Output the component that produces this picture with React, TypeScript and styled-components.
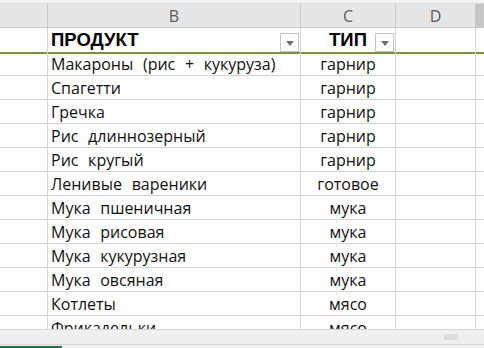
import React from "react";
import styled, { createGlobalStyle } from "styled-components";

const GlobalStyle = createGlobalStyle`
  html, body {
    margin: 0;
    padding: 0;
    background: #ffffff;
  }
  body {
    font-family: "Open Sans", "Noto Sans", sans-serif;
  }
`;

const COLS = "48px 253px 95px 80px 8px";

const Sheet = styled.div`
  width: 484px;
  height: 348px;
  display: flex;
  flex-direction: column;
  overflow: hidden;
  background: #ffffff;
`;

const TopEdge = styled.div`
  height: 3px;
  background: #f3f3f3;
  border-bottom: 1px solid #d6d6d6;
`;

const Grid = styled.div`
  height: 325px;
  overflow: hidden;
  display: grid;
  grid-template-columns: ${COLS};
  grid-auto-rows: 24px;
  align-content: start;
`;

const HeadCell = styled.div<{ $dark?: boolean }>`
  height: 23px;
  background: ${({ $dark }) => ($dark ? "#c6c6c6" : "#e6e6e6")};
  border-right: 1px solid #c9c9c9;
  border-bottom: 1px solid #c9c9c9;
  display: flex;
  align-items: center;
  justify-content: center;
  color: #5a5a5a;
  font-size: 16px;
  font-family: "Open Sans", sans-serif;
`;

const Cell = styled.div<{ $center?: boolean; $title?: boolean; $edge?: boolean }>`
  box-sizing: border-box;
  height: ${({ $title }) => ($title ? "26px" : "24px")};
  border-right: ${({ $edge }) => ($edge ? "none" : "1px solid #d4d4d4")};
  border-bottom: ${({ $title }) =>
    $title ? "2px solid #76923c" : "1px solid #d4d4d4"};
  display: flex;
  align-items: center;
  justify-content: ${({ $center }) => ($center ? "center" : "flex-start")};
  padding-left: ${({ $center }) => ($center ? "0" : "3px")};
  font-size: 16px;
  color: #111;
  white-space: pre;
  word-spacing: 5.5px;
  overflow: hidden;
  position: relative;
`;

const TitleText = styled.span`
  font-family: "Liberation Sans", Arial, sans-serif;
  font-weight: bold;
  font-size: 18.5px;
  word-spacing: 0;
  color: #000;
`;

const Filter = styled.div`
  position: absolute;
  right: 1px;
  top: 5px;
  width: 17px;
  height: 17px;
  border: 1px solid #c6c6c6;
  background: #fff;
  display: flex;
  align-items: center;
  justify-content: center;

  &::after {
    content: "";
    border-left: 4px solid transparent;
    border-right: 4px solid transparent;
    border-top: 5px solid #6b6b6b;
    margin-top: 1px;
  }
`;

const BottomBar = styled.div`
  height: 14px;
  background: #efefef;
  border-top: 1px solid #d6d6d6;
  border-bottom: 1px solid #d6d6d6;
  display: flex;
  justify-content: flex-end;
  align-items: center;
  padding-right: 26px;
`;

const Thumb = styled.div`
  width: 14px;
  height: 6px;
  background: #dcdcdc;
`;

const Tabs = styled.div`
  flex: 1;
  background: #f0f0f0;
  display: flex;
  align-items: flex-end;
`;

const ActiveTab = styled.div`
  width: 62px;
  height: 2px;
  background: #217346;
`;

const rows: [string, string][] = [
  ["Макароны (рис + кукуруза)", "гарнир"],
  ["Спагетти", "гарнир"],
  ["Гречка", "гарнир"],
  ["Рис длиннозерный", "гарнир"],
  ["Рис кругый", "гарнир"],
  ["Ленивые вареники", "готовое"],
  ["Мука пшеничная", "мука"],
  ["Мука рисовая", "мука"],
  ["Мука кукурузная", "мука"],
  ["Мука овсяная", "мука"],
  ["Котлеты", "мясо"],
  ["Фрикадельки", "мясо"],
];

const App = () => {
  return (
    <Sheet>
      <GlobalStyle />
      <TopEdge />
      <Grid>
        <HeadCell />
        <HeadCell>B</HeadCell>
        <HeadCell>C</HeadCell>
        <HeadCell>D</HeadCell>
        <HeadCell $dark />

        <Cell $title />
        <Cell $title>
          <TitleText>ПРОДУКТ</TitleText>
          <Filter />
        </Cell>
        <Cell $title $center>
          <TitleText>ТИП</TitleText>
          <Filter />
        </Cell>
        <Cell $title />
        <Cell $title $edge />

        {rows.map(([name, type]) => (
          <React.Fragment key={name}>
            <Cell />
            <Cell>{name}</Cell>
            <Cell $center>{type}</Cell>
            <Cell />
            <Cell $edge />
          </React.Fragment>
        ))}
      </Grid>
      <BottomBar>
        <Thumb />
      </BottomBar>
      <Tabs>
        <ActiveTab />
      </Tabs>
    </Sheet>
  );
};

export default App;
